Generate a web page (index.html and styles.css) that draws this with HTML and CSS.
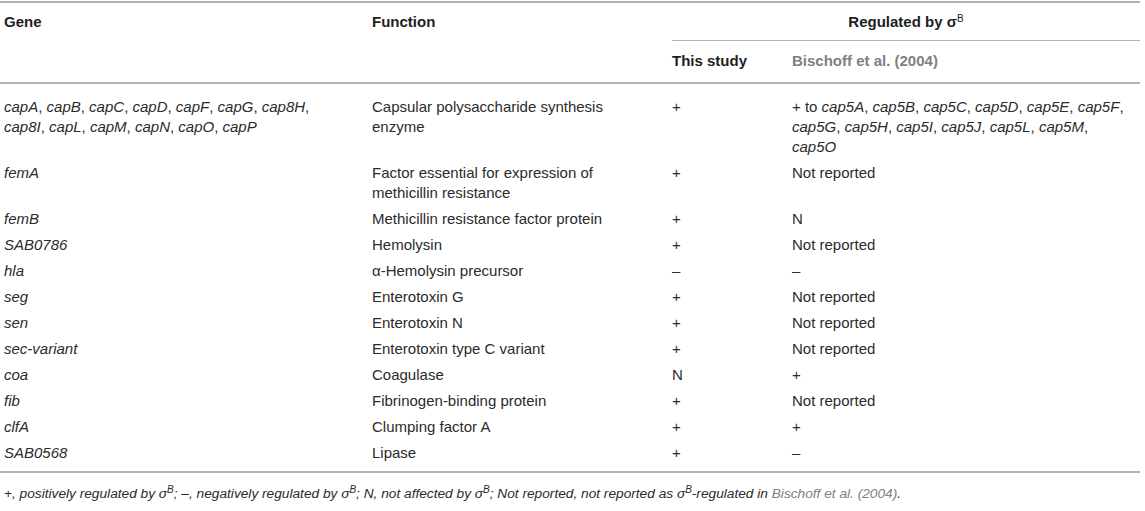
FILE: index.html
```html
<!DOCTYPE html>
<html lang="en">
<head>
    <meta charset="UTF-8">
    <meta name="viewport" content="width=device-width, initial-scale=1.0">
    <title>Virulence genes regulated by sigma B</title>
    <link rel="stylesheet" href="styles.css">
</head>
<body>
    <table class="gene-table">
        <colgroup>
            <col class="col-gene">
            <col class="col-function">
            <col class="col-study">
            <col class="col-ref">
        </colgroup>
        <thead>
            <tr class="head-top">
                <th rowspan="2">Gene</th>
                <th rowspan="2">Function</th>
                <th colspan="2" class="group-head"><div class="group-label">Regulated by &sigma;<sup>B</sup></div></th>
            </tr>
            <tr class="head-sub">
                <th>This study</th>
                <th class="ref">Bischoff et al. (2004)</th>
            </tr>
        </thead>
        <tbody>
            <tr class="first">
                <td class="nw"><i>capA</i>, <i>capB</i>, <i>capC</i>, <i>capD</i>, <i>capF</i>, <i>capG</i>, <i>cap8H</i>,<br><i>cap8I</i>, <i>capL</i>, <i>capM</i>, <i>capN</i>, <i>capO</i>, <i>capP</i></td>
                <td class="nw">Capsular polysaccharide synthesis<br>enzyme</td>
                <td>+</td>
                <td class="nw">+ to <i>cap5A</i>, <i>cap5B</i>, <i>cap5C</i>, <i>cap5D</i>, <i>cap5E</i>, <i>cap5F</i>,<br><i>cap5G</i>, <i>cap5H</i>, <i>cap5I</i>, <i>cap5J</i>, <i>cap5L</i>, <i>cap5M</i>,<br><i>cap5O</i></td>
            </tr>
            <tr>
                <td><i>femA</i></td>
                <td class="nw">Factor essential for expression of<br>methicillin resistance</td>
                <td>+</td>
                <td>Not reported</td>
            </tr>
            <tr>
                <td><i>femB</i></td>
                <td>Methicillin resistance factor protein</td>
                <td>+</td>
                <td>N</td>
            </tr>
            <tr>
                <td><i>SAB0786</i></td>
                <td>Hemolysin</td>
                <td>+</td>
                <td>Not reported</td>
            </tr>
            <tr>
                <td><i>hla</i></td>
                <td>&alpha;-Hemolysin precursor</td>
                <td>&ndash;</td>
                <td>&ndash;</td>
            </tr>
            <tr>
                <td><i>seg</i></td>
                <td>Enterotoxin G</td>
                <td>+</td>
                <td>Not reported</td>
            </tr>
            <tr>
                <td><i>sen</i></td>
                <td>Enterotoxin N</td>
                <td>+</td>
                <td>Not reported</td>
            </tr>
            <tr>
                <td><i>sec-variant</i></td>
                <td>Enterotoxin type C variant</td>
                <td>+</td>
                <td>Not reported</td>
            </tr>
            <tr>
                <td><i>coa</i></td>
                <td>Coagulase</td>
                <td>N</td>
                <td>+</td>
            </tr>
            <tr>
                <td><i>fib</i></td>
                <td>Fibrinogen-binding protein</td>
                <td>+</td>
                <td>Not reported</td>
            </tr>
            <tr>
                <td><i>clfA</i></td>
                <td>Clumping factor A</td>
                <td>+</td>
                <td>+</td>
            </tr>
            <tr class="last">
                <td><i>SAB0568</i></td>
                <td>Lipase</td>
                <td>+</td>
                <td>&ndash;</td>
            </tr>
        </tbody>
    </table>

    <p class="footnote">+, positively regulated by &sigma;<sup>B</sup>; &ndash;, negatively regulated by &sigma;<sup>B</sup>; N, not affected by &sigma;<sup>B</sup>; Not reported, not reported as &sigma;<sup>B</sup>-regulated in <span class="ref">Bischoff et al. (2004)</span>.</p>
</body>
</html>
```

FILE: styles.css
```css
:root {
    --text-color: #2b2b2b;
    --muted: #808080;
    --rule: #b4b4b4;
}

body {
    font-family: "Liberation Sans", Arial, sans-serif;
    font-size: 15px;
    line-height: 20px;
    color: var(--text-color);
    background: #fff;
    margin: 0;
    padding: 1px 0 0 0;
}

.gene-table {
    width: 1140px;
    table-layout: fixed;
    border-collapse: collapse;
    border-top: 2px solid var(--rule);
}

.col-gene { width: 368px; }
.col-function { width: 300px; }
.col-study { width: 120px; }
.col-ref { width: 352px; }

th, td {
    text-align: left;
    vertical-align: top;
    padding: 3px 4px;
}

th {
    font-weight: bold;
    color: #1e1e1e;
}

thead {
    border-bottom: 2px solid var(--rule);
}

.head-top th {
    padding-top: 9px;
    padding-bottom: 8px;
}

.head-top .group-head {
    padding: 9px 0 0 4px;
}

.group-label {
    text-align: center;
    padding-bottom: 8px;
    border-bottom: 1px solid var(--rule);
}

.head-sub th {
    padding-top: 10px;
    padding-bottom: 11px;
}

th.ref,
.footnote .ref {
    color: var(--muted);
}

sup {
    font-size: 10px;
    line-height: 0;
    vertical-align: 5px;
    font-weight: normal;
}

.nw {
    white-space: nowrap;
}

tbody tr.first td {
    padding-top: 13px;
}

tbody tr.last td {
    padding-bottom: 8px;
}

tbody {
    border-bottom: 2px solid var(--rule);
}

.footnote {
    margin: 0;
    padding: 12px 4px 0;
    font-size: 13.7px;
    line-height: 18px;
    font-style: italic;
}
```
